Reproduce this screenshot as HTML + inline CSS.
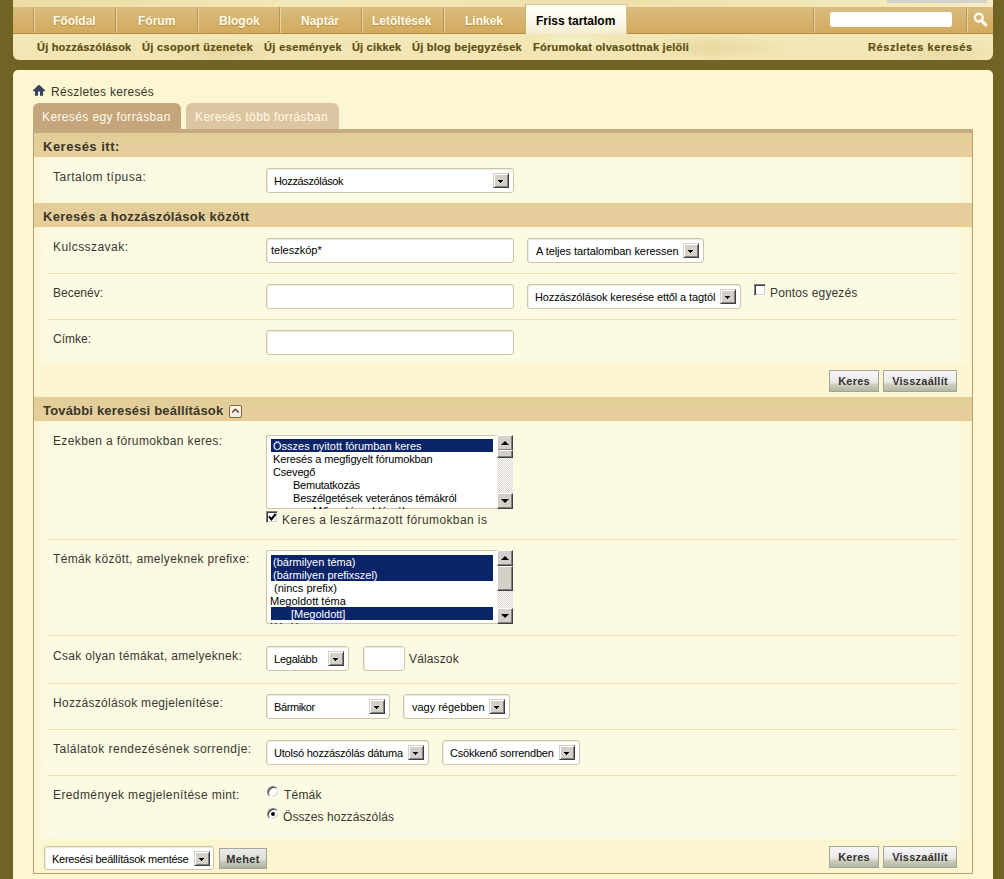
<!DOCTYPE html>
<html><head><meta charset="utf-8">
<style>
*{margin:0;padding:0;box-sizing:border-box}
html,body{width:1004px;height:879px;overflow:hidden}
body{position:relative;background:#716324;font-family:"Liberation Sans",sans-serif}
.a{position:absolute}
.t{position:absolute;white-space:nowrap}
/* header */
#topband{left:13px;top:0;width:980px;height:7px;background:linear-gradient(90deg,#ecdca4,#f3e8b8 30%,#eee0aa 60%,#f5ecc0)}
#graybar{left:887px;top:0;width:100px;height:3px;background:#d6d1cc}
#nav{left:13px;top:7px;width:980px;height:27px;background:linear-gradient(#d8bc80,#d2aa5c);border-bottom:1px solid #b48a48}
.sep{position:absolute;top:7px;width:2px;height:26px;border-left:1px solid #b89458;border-right:1px solid #eed49a}
.navt{position:absolute;top:14px;font:bold 12px "Liberation Sans",sans-serif;color:#fffbea;text-shadow:0 1px 1px rgba(150,110,40,.5)}
#seltab{left:525px;top:4px;width:102px;height:30px;background:linear-gradient(#fffffb,#fbf8ea 50%,#f3ecd0);border-top:1px solid #d6c89c;border-left:1px solid #c9ae74;border-right:1px solid #d9c089}
#sub{left:13px;top:34px;width:980px;height:26px;background:radial-gradient(ellipse 60px 14px at 210px 18px,rgba(215,190,120,.35),transparent),radial-gradient(ellipse 70px 12px at 700px 14px,rgba(215,190,120,.35),transparent),radial-gradient(ellipse 50px 12px at 930px 20px,rgba(215,190,120,.25),transparent),radial-gradient(ellipse 40px 10px at 560px 8px,rgba(255,250,220,.6),transparent),#f1e6b4;border-radius:0 0 6px 6px}
.subt{position:absolute;top:41px;font:bold 11px "Liberation Sans",sans-serif;color:#5e4e12;-webkit-text-stroke:.2px #5e4e12}
#searchbox{left:830px;top:12px;width:122px;height:15px;background:#fff;border-radius:3px}
/* content */
#content{left:13px;top:70px;width:980px;height:820px;background:#fcf7d2;border-radius:5px 5px 0 0}
.crumb{font:12px "Liberation Sans",sans-serif;color:#3a3828}
.tab{position:absolute;top:103px;height:26px;border-radius:6px 6px 0 0;font:12px "Liberation Sans",sans-serif;color:#fffaea;padding:7px 0 0 9px;letter-spacing:.38px}
#form{left:33px;top:129px;width:940px;height:745px;border:1px solid #b8a070;border-top:none;background:#fbf5d0}
#tabline{left:33px;top:129px;width:940px;height:4px;background:#c4ab80}
.hdr{position:absolute;left:34px;width:938px;height:24px;background:linear-gradient(#e2cc98,#e6cf9c 80%,#e8cc90);font:bold 13px "Liberation Sans",sans-serif;color:#3a3628;padding:6px 0 0 9px;letter-spacing:.28px}
.row{position:absolute;left:34px;width:938px;background:linear-gradient(90deg,#fbf5d0 0,#fcf8da 8px,#fdfae4 15px,#fdfae4 921px,#fcf8da 928px,#fbf5d0 938px)}
.rsep{position:absolute;left:48px;width:909px;height:1px;background:#e9ddb2}
.lbl{position:absolute;left:53px;font:12px "Liberation Sans",sans-serif;color:#383830}
.inp{position:absolute;background:#fff;border:1px solid #cdc5a5;border-radius:3px;box-shadow:inset 1px 1px 0 #efece0}
.sel{position:absolute;background:#fff;border:1px solid #cdc5a5;border-radius:3px;box-shadow:inset 1px 1px 0 #efece0;font:11px "Liberation Sans",sans-serif;color:#000}
.sel span{position:absolute;left:7px;top:6px;white-space:nowrap}
.dd{position:absolute;width:16px;height:15px;background:#d4d0c8;border-top:1px solid #d4d0c8;border-left:1px solid #d4d0c8;border-right:1px solid #404040;border-bottom:1px solid #404040;box-shadow:inset 1px 1px 0 #fff, inset -1px -1px 0 #808080}
.dd:after{content:"";position:absolute;left:4px;top:6px;width:5px;height:3px;background:linear-gradient(#000,#000) 0 0/5px 1px no-repeat,linear-gradient(#000,#000) 1px 1px/3px 1px no-repeat,linear-gradient(#000,#000) 2px 2px/1px 1px no-repeat}
.btn{position:absolute;height:22px;background:linear-gradient(#f7f5f7,#eceae8 55%,#cfcfbd 68%,#b6b6a6);border:1px solid #a4a49c;font:bold 11px "Liberation Sans",sans-serif;color:#333;text-align:center;padding-top:4px}

.cb{position:absolute;width:12px;height:12px;background:#fff;border-top:1px solid #808080;border-left:1px solid #808080;border-right:1px solid #fff;border-bottom:1px solid #fff;box-shadow:inset 1px 1px 0 #404040, inset -1px -1px 0 #d4d0c8}
.rd{position:absolute;width:12px;height:12px;border-radius:50%;background:#fff;border:1px solid;border-color:#808080 #fff #fff #808080;box-shadow:inset 1px 1px 0 #404040, inset -1px -1px 0 #d4d0c8}
.rd.on:after{content:"";position:absolute;left:3px;top:3px;width:4px;height:4px;border-radius:50%;background:#000}
.lb{position:absolute;background:#fff;box-shadow:inset 1px 0 0 #cdc5a5,inset 0 1px 0 #cdc5a5,inset 0 -1px 0 #cdc5a5;border-radius:3px 0 0 3px;overflow:hidden;font:11px "Liberation Sans",sans-serif;color:#000}
.opt{position:absolute;left:5px;width:222px;height:13px;line-height:14px;white-space:nowrap;padding-left:2px}
.opt.sel1{background:#0a246a;color:#fff}
.sb{position:absolute;right:0;width:16px;background:repeating-conic-gradient(#d8d4cc 0 25%,#fff 0 50%) 0 0/2px 2px}
.sbu,.sbd,.sbt{position:absolute;left:0;width:16px;height:16px;background:#d4d0c8;border-top:1px solid #fff;border-left:1px solid #fff;border-right:1px solid #404040;border-bottom:1px solid #404040;box-shadow:inset -1px -1px 0 #808080}
.sbu{top:0}.sbd{bottom:0}
.sbu:after{content:"";position:absolute;left:3px;top:5px;border-left:4px solid transparent;border-right:4px solid transparent;border-bottom:4px solid #000}
.sbd:after{content:"";position:absolute;left:3px;top:5px;border-left:4px solid transparent;border-right:4px solid transparent;border-top:4px solid #000}
</style></head><body>
<div id="topband" class="a"></div>
<div id="graybar" class="a"></div>
<div id="nav" class="a"></div>
<div class="sep" style="left:33px"></div>
<div class="sep" style="left:115px"></div>
<div class="sep" style="left:197px"></div>
<div class="sep" style="left:279px"></div>
<div class="sep" style="left:361px"></div>
<div class="sep" style="left:443px"></div>
<div id="seltab" class="a"></div>
<div class="sep" style="left:813px"></div>
<div class="sep" style="left:966px"></div>
<div class="navt" style="left:53px">Főoldal</div>
<div class="navt" style="left:138px">Fórum</div>
<div class="navt" style="left:219px">Blogok</div>
<div class="navt" style="left:301px">Naptár</div>
<div class="navt" style="left:372px">Letöltések</div>
<div class="navt" style="left:465px">Linkek</div>
<div class="navt" style="left:536px;color:#000;text-shadow:none">Friss tartalom</div>
<div id="searchbox" class="a"></div>
<svg class="a" style="left:972px;top:11px" width="18" height="18" viewBox="0 0 18 18"><circle cx="6.8" cy="6.6" r="3.9" fill="none" stroke="#fffaf0" stroke-width="2.4"/><line x1="9.5" y1="9.5" x2="13.8" y2="13.8" stroke="#fffaf0" stroke-width="3.2" stroke-linecap="round"/></svg>
<div id="sub" class="a"></div>
<div class="subt" style="left:37px;letter-spacing:.21px">Új hozzászólások</div>
<div class="subt" style="left:142px;letter-spacing:.34px">Új csoport üzenetek</div>
<div class="subt" style="left:264px;letter-spacing:.38px">Új események</div>
<div class="subt" style="left:352px;letter-spacing:.18px">Új cikkek</div>
<div class="subt" style="left:412px;letter-spacing:.25px">Új blog bejegyzések</div>
<div class="subt" style="left:533px;letter-spacing:.25px">Fórumokat olvasottnak jelöli</div>
<div class="subt" style="left:868px;letter-spacing:.58px">Részletes keresés</div>

<div id="content" class="a"></div>
<svg class="a" style="left:33px;top:84px" width="13" height="13" viewBox="0 0 13 13"><path d="M5.5 1 L6.5 1 L12 6.3 L12 7.3 L10 7.3 L10 11.8 L7 11.8 L7 7.6 L5 7.6 L5 11.8 L2 11.8 L2 7.3 L0 7.3 L0 6.3 Z" fill="#36435e"/></svg>
<div class="t crumb" style="left:51px;top:85px;letter-spacing:.3px">Részletes keresés</div>

<div class="tab" style="left:33px;width:148px;background:#c5a67c">Keresés egy forrásban</div>
<div class="tab" style="left:186px;width:153px;background:#dcc5a0">Keresés több forrásban</div>

<div id="form" class="a"></div>
<div id="tabline" class="a"></div>


<!-- headers -->
<div class="hdr" style="top:133px;letter-spacing:.5px">Keresés itt:</div>
<div class="row" style="top:157px;height:46px"></div>
<div class="hdr" style="top:203px">Keresés a hozzászólások között</div>
<div class="row" style="top:227px;height:137px"></div>
<div class="rsep" style="top:273px"></div>
<div class="rsep" style="top:319px"></div>
<div class="hdr" style="top:397px;letter-spacing:.18px">További keresési beállítások</div>
<div class="row" style="top:421px;height:418px"></div>
<div class="rsep" style="top:539px"></div>
<div class="rsep" style="top:635px"></div>
<div class="rsep" style="top:683px"></div>
<div class="rsep" style="top:729px"></div>
<div class="rsep" style="top:775px"></div>

<!-- row 1 -->
<div class="t lbl" style="top:170px;letter-spacing:.49px">Tartalom típusa:</div>
<div class="sel" style="left:266px;top:168px;width:248px;height:25px"><span style="left:7px;letter-spacing:-.37px">Hozzászólások</span></div>
<div class="dd" style="left:493px;top:173px"></div>

<!-- row 2 -->
<div class="t lbl" style="top:240px;letter-spacing:.45px">Kulcsszavak:</div>
<div class="inp" style="left:266px;top:238px;width:248px;height:25px"></div>
<div class="t" style="left:271px;top:244px;font:11px 'Liberation Sans',sans-serif;color:#000">teleszkóp*</div>
<div class="sel" style="left:527px;top:238px;width:177px;height:25px"><span style="left:8px;letter-spacing:-.06px">A teljes tartalomban keressen</span></div>
<div class="dd" style="left:683px;top:243px"></div>

<!-- row 3 -->
<div class="t lbl" style="top:286px">Becenév:</div>
<div class="inp" style="left:266px;top:284px;width:248px;height:25px"></div>
<div class="sel" style="left:527px;top:284px;width:214px;height:25px"><span style="left:7px;letter-spacing:-.12px">Hozzászólások keresése ettől a tagtól</span></div>
<div class="dd" style="left:720px;top:289px"></div>
<div class="cb" style="left:754px;top:284px"></div>
<div class="t lbl" style="left:770px;top:286px;letter-spacing:.15px">Pontos egyezés</div>

<!-- row 4 -->
<div class="t lbl" style="top:332px">Címke:</div>
<div class="inp" style="left:266px;top:330px;width:248px;height:25px"></div>

<div class="btn" style="left:829px;top:370px;width:50px;letter-spacing:.2px">Keres</div>
<div class="btn" style="left:883px;top:370px;width:74px;letter-spacing:.25px">Visszaállít</div>

<!-- toggle icon -->
<div class="a" style="left:229px;top:405px;width:13px;height:13px;border:1px solid #8c6434;border-radius:2px;background:linear-gradient(#fffcf8,#f8ece4 70%,#e8eef0)"></div>
<svg class="a" style="left:229px;top:405px" width="13" height="13" viewBox="0 0 13 13"><path d="M3.2 7.6 L6.4 4.3 L9.8 7.6" fill="none" stroke="#5e3c22" stroke-width="1.4"/></svg>

<!-- row 5 -->
<div class="t lbl" style="top:434px;letter-spacing:.37px">Ezekben a fórumokban keres:</div>
<div class="lb" style="left:266px;top:435px;width:247px;height:74px">
  <div class="opt sel1" style="top:4px">Összes nyitott fórumban keres</div>
  <div class="opt" style="top:17px;letter-spacing:-.14px">Keresés a megfigyelt fórumokban</div>
  <div class="opt" style="top:30px;letter-spacing:-.17px">Csevegő</div>
  <div class="opt" style="top:43px;padding-left:22px;letter-spacing:-.24px">Bemutatkozás</div>
  <div class="opt" style="top:56px;padding-left:22px;letter-spacing:-.14px">Beszélgetések veterános témákról</div>
  <div class="opt" style="top:69px;padding-left:42px">Műszaki problémák</div>
  <div class="sb" style="top:0;height:74px"><div class="sbu"></div><div class="sbt" style="top:15px;height:8px"></div><div class="sbd"></div></div>
</div>
<div class="cb" style="left:266px;top:511px"><svg style="position:absolute;left:-1px;top:-1px" width="12" height="12" viewBox="0 0 12 12"><path d="M3 5.3 L5.4 8.4 L9.6 3" fill="none" stroke="#000" stroke-width="2.1" stroke-linejoin="miter"/></svg></div>
<div class="t lbl" style="left:282px;top:513px;letter-spacing:.41px">Keres a leszármazott fórumokban is</div>

<!-- row 6 -->
<div class="t lbl" style="top:552px;letter-spacing:.34px">Témák között, amelyeknek prefixe:</div>
<div class="lb" style="left:266px;top:550px;width:247px;height:74px">
  <div class="opt sel1" style="top:5px">(bármilyen téma)</div>
  <div class="opt sel1" style="top:18px">(bármilyen prefixszel)</div>
  <div class="opt" style="top:31px;padding-left:3px">(nincs prefix)</div>
  <div class="opt" style="top:44px;left:2px">Megoldott téma</div>
  <div class="opt sel1" style="top:57px;padding-left:20px">[Megoldott]</div>
  <div class="opt" style="top:70px;left:2px">Kérdés</div>
  <div class="sb" style="top:0;height:74px"><div class="sbu"></div><div class="sbt" style="top:16px;height:25px"></div><div class="sbd"></div></div>
</div>

<!-- row 7 -->
<div class="t lbl" style="top:649px;letter-spacing:.31px">Csak olyan témákat, amelyeknek:</div>
<div class="sel" style="left:266px;top:646px;width:83px;height:25px"><span style="left:7px;letter-spacing:-.24px">Legalább</span></div>
<div class="dd" style="left:328px;top:651px"></div>
<div class="inp" style="left:363px;top:646px;width:42px;height:25px"></div>
<div class="t lbl" style="left:409px;top:652px;letter-spacing:.14px">Válaszok</div>

<!-- row 8 -->
<div class="t lbl" style="top:696px;letter-spacing:.29px">Hozzászólások megjelenítése:</div>
<div class="sel" style="left:266px;top:694px;width:124px;height:25px"><span style="left:7px;letter-spacing:-.41px">Bármikor</span></div>
<div class="dd" style="left:369px;top:699px"></div>
<div class="sel" style="left:403px;top:694px;width:107px;height:25px"><span style="left:8px;letter-spacing:-.02px">vagy régebben</span></div>
<div class="dd" style="left:489px;top:699px"></div>

<!-- row 9 -->
<div class="t lbl" style="top:742px;letter-spacing:.48px">Találatok rendezésének sorrendje:</div>
<div class="sel" style="left:266px;top:740px;width:163px;height:25px"><span style="left:7px;letter-spacing:-.23px">Utolsó hozzászólás dátuma</span></div>
<div class="dd" style="left:408px;top:745px"></div>
<div class="sel" style="left:442px;top:740px;width:138px;height:25px"><span style="left:7px;letter-spacing:-.21px">Csökkenő sorrendben</span></div>
<div class="dd" style="left:559px;top:745px"></div>

<!-- row 10 -->
<div class="t lbl" style="top:788px;letter-spacing:.40px">Eredmények megjelenítése mint:</div>
<div class="rd" style="left:267px;top:786px"></div>
<div class="t lbl" style="left:284px;top:788px;letter-spacing:.2px">Témák</div>
<div class="rd on" style="left:267px;top:808px"></div>
<div class="t lbl" style="left:283px;top:810px;letter-spacing:.09px">Összes hozzászólás</div>

<!-- bottom -->
<div class="sel" style="left:44px;top:846px;width:170px;height:24px"><span style="left:7px;letter-spacing:-.26px">Keresési beállítások mentése</span></div>
<div class="dd" style="left:194px;top:851px"></div>
<div class="btn" style="left:219px;top:848px;width:48px;height:21px;padding-top:4px;letter-spacing:.3px;background:linear-gradient(#ecebe8,#dddcd6 55%,#c6c6b6 70%,#b2b2a2)">Mehet</div>
<div class="btn" style="left:829px;top:846px;width:50px;letter-spacing:.2px">Keres</div>
<div class="btn" style="left:883px;top:846px;width:74px;letter-spacing:.25px">Visszaállít</div>

</body></html>
